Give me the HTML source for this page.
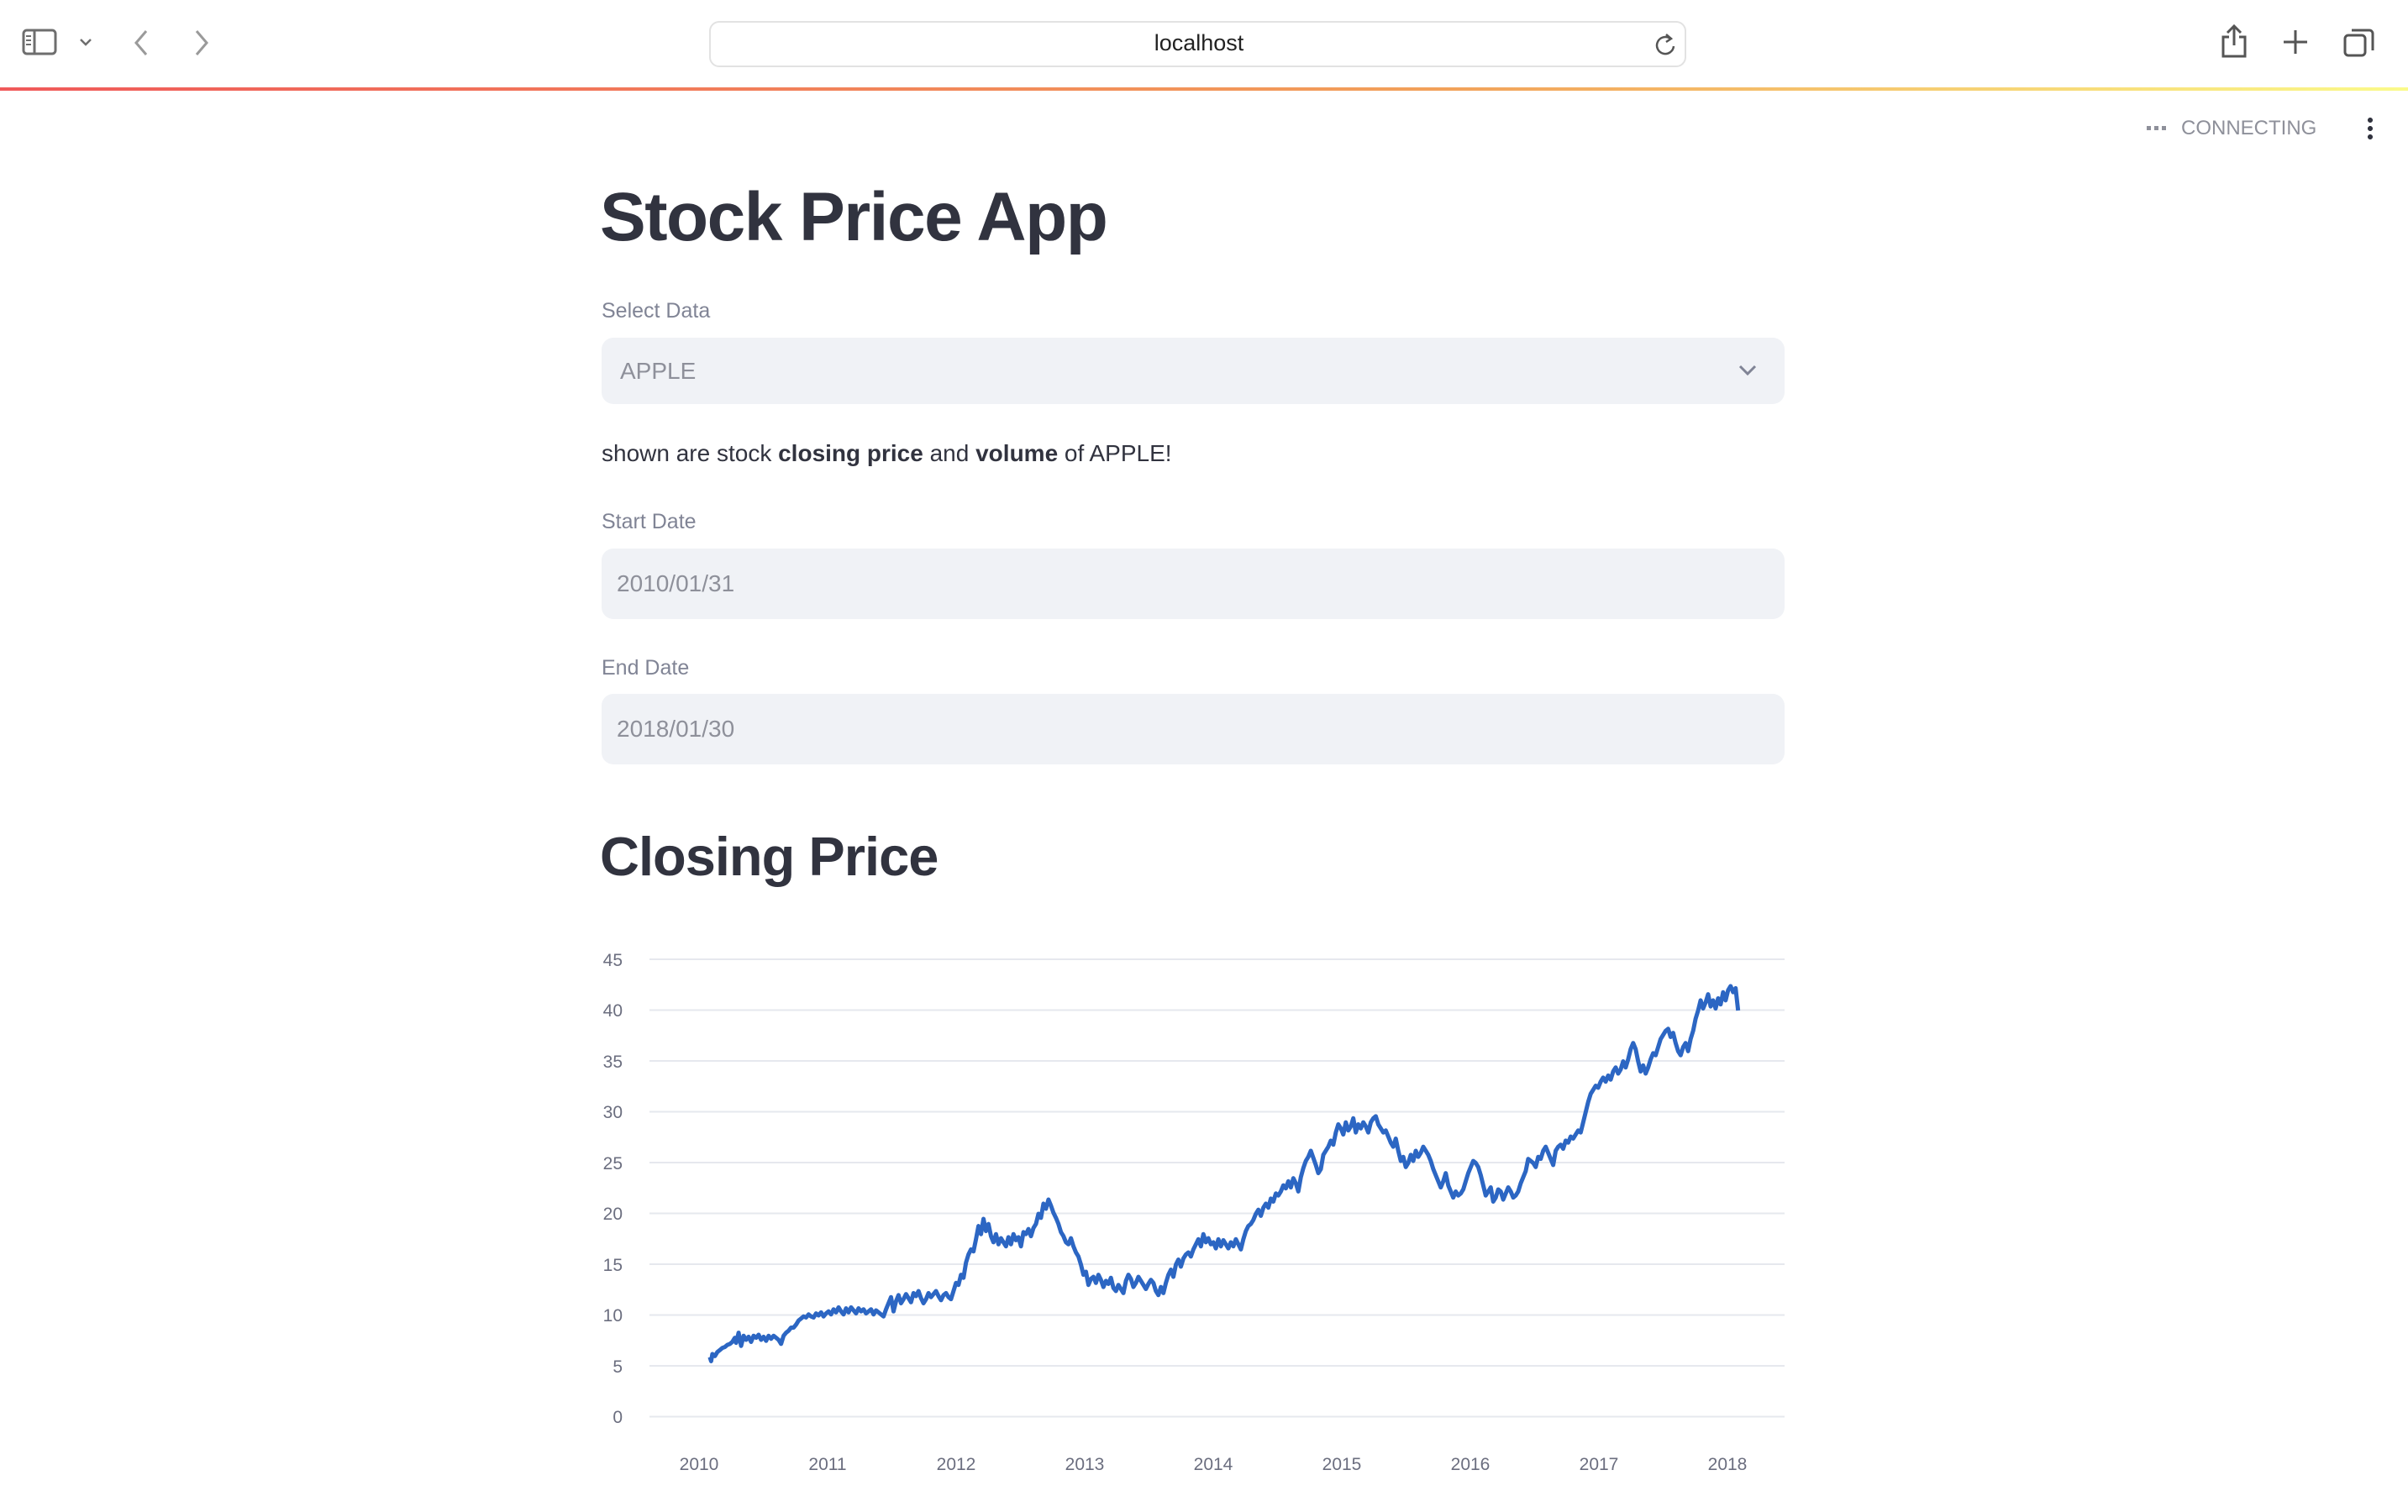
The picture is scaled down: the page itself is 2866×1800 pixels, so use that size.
<!DOCTYPE html>
<html><head><meta charset="utf-8"><style>
*{margin:0;padding:0;box-sizing:border-box}
body{width:2866px;height:1800px;background:#fff;font-family:"Liberation Sans",sans-serif;position:relative;overflow:hidden;color:#31333f}
.abs{position:absolute}
.url{left:844px;top:25px;width:1163px;height:55px;border:2px solid #e2e2e2;border-radius:12px;background:#fff}
.grad{left:0;top:104px;width:2866px;height:4px;background:linear-gradient(90deg,#f0595a,#f2a15a 60%,#fafa8a)}
.label{font-size:25px;color:#808495;left:716px}
.box{left:716px;width:1408px;background:#f0f2f6;border-radius:14px}
.ph{font-size:28px;color:#8e909a;position:absolute}
</style></head><body>
<svg class="abs" style="left:26px;top:34px" width="44" height="34" viewBox="0 0 44 34"><rect x="2" y="2" width="38" height="28" rx="4" fill="none" stroke="#6e6e6e" stroke-width="3"/><line x1="15" y1="2" x2="15" y2="30" stroke="#6e6e6e" stroke-width="3"/><rect x="5" y="8" width="6" height="2" fill="#6e6e6e"/><rect x="5" y="13" width="6" height="2" fill="#6e6e6e"/><rect x="5" y="18" width="6" height="2" fill="#6e6e6e"/></svg>
<svg class="abs" style="left:94px;top:44px" width="16" height="12"><path d="M2 3 L8 9 L14 3" fill="none" stroke="#6e6e6e" stroke-width="2.5"/></svg>
<svg class="abs" style="left:158px;top:34px" width="20" height="34"><path d="M16 3 L4 17 L16 31" fill="none" stroke="#9a9a9a" stroke-width="3"/></svg>
<svg class="abs" style="left:230px;top:34px" width="20" height="34"><path d="M4 3 L16 17 L4 31" fill="none" stroke="#9a9a9a" stroke-width="3"/></svg>
<div class="abs url"></div>
<div class="abs" style="left:1327px;top:36px;width:200px;text-align:center;font-size:27px;color:#222">localhost</div>
<svg class="abs" style="left:1968px;top:38px" width="28" height="30"><path d="M20 8 A10 10 0 1 0 24 17" fill="none" stroke="#555" stroke-width="2.5"/><path d="M15 3 L21 8 L15 12" fill="none" stroke="#555" stroke-width="2.5"/></svg>
<svg class="abs" style="left:2642px;top:28px" width="34" height="42"><path d="M17 26 V4 M9 11 L17 3 L25 11" fill="none" stroke="#555" stroke-width="3"/><path d="M11 16 H4 V39 H30 V16 H23" fill="none" stroke="#555" stroke-width="3"/></svg>
<svg class="abs" style="left:2716px;top:34px" width="32" height="32"><path d="M16 2 V30 M2 16 H30" stroke="#555" stroke-width="3"/></svg>
<svg class="abs" style="left:2788px;top:32px" width="40" height="38"><rect x="3" y="10" width="24" height="24" rx="4" fill="none" stroke="#555" stroke-width="3"/><path d="M11 4 H32 A4 4 0 0 1 36 8 V28" fill="none" stroke="#555" stroke-width="3"/></svg>
<div class="abs grad"></div>
<div class="abs" style="left:2555px;top:150px;width:24px;height:5px;background:repeating-linear-gradient(90deg,#8e909a 0 5px,transparent 5px 9px)"></div>
<div class="abs" style="left:2596px;top:139px;font-size:24px;color:#8e909a">CONNECTING</div>
<div class="abs" style="left:2818px;top:138px;width:6px;height:28px;background:radial-gradient(circle,#31333f 2.8px,transparent 3.2px) 0 0/6px 10px repeat-y"></div>
<div class="abs" style="left:714px;top:212px;font-size:82px;font-weight:bold;letter-spacing:-1.5px;color:#31333f">Stock Price App</div>
<div class="abs label" style="top:356px">Select Data</div>
<div class="abs box" style="top:402px;height:79px"><span class="ph" style="left:22px;top:24px">APPLE</span>
<svg class="abs" style="left:1352px;top:31px" width="24" height="16"><path d="M3 3 L12 12 L21 3" fill="none" stroke="#808495" stroke-width="3"/></svg></div>
<div class="abs" style="left:716px;top:524px;font-size:28px;color:#31333f">shown are stock <b>closing price</b> and <b>volume</b> of APPLE!</div>
<div class="abs label" style="top:607px">Start Date</div>
<div class="abs box" style="top:653px;height:84px"><span class="ph" style="left:18px;top:26px">2010/01/31</span></div>
<div class="abs label" style="top:781px">End Date</div>
<div class="abs box" style="top:826px;height:84px"><span class="ph" style="left:18px;top:26px">2018/01/30</span></div>
<div class="abs" style="left:714px;top:982px;font-size:65px;font-weight:bold;letter-spacing:-1px;color:#31333f">Closing Price</div>
<svg class="abs" style="left:0;top:0" width="2866" height="1800">
<g stroke="#e6e8ee" stroke-width="2">
<line x1="773" x2="2124" y1="1142" y2="1142"/><line x1="773" x2="2124" y1="1202.5" y2="1202.5"/><line x1="773" x2="2124" y1="1263" y2="1263"/><line x1="773" x2="2124" y1="1323.5" y2="1323.5"/><line x1="773" x2="2124" y1="1384" y2="1384"/><line x1="773" x2="2124" y1="1444.5" y2="1444.5"/><line x1="773" x2="2124" y1="1505" y2="1505"/><line x1="773" x2="2124" y1="1565.5" y2="1565.5"/><line x1="773" x2="2124" y1="1626" y2="1626"/><line x1="773" x2="2124" y1="1686.5" y2="1686.5"/>
</g>
<g font-size="21" fill="#6b6e7f" text-anchor="end" font-family="Liberation Sans,sans-serif">
<text x="741" y="1150">45</text><text x="741" y="1210">40</text><text x="741" y="1271">35</text><text x="741" y="1331">30</text><text x="741" y="1392">25</text><text x="741" y="1452">20</text><text x="741" y="1513">15</text><text x="741" y="1573">10</text><text x="741" y="1634">5</text><text x="741" y="1694">0</text>
</g>
<g font-size="21" fill="#6b6e7f" text-anchor="middle" font-family="Liberation Sans,sans-serif">
<text x="832" y="1750">2010</text><text x="985" y="1750">2011</text><text x="1138" y="1750">2012</text><text x="1291" y="1750">2013</text><text x="1444" y="1750">2014</text><text x="1597" y="1750">2015</text><text x="1750" y="1750">2016</text><text x="1903" y="1750">2017</text><text x="2056" y="1750">2018</text>
</g>
<g transform="translate(833,1687) scale(1.487,-1.21)">
<polyline fill="none" stroke="#2c66c3" stroke-width="5" vector-effect="non-scaling-stroke" stroke-linejoin="round" points="
8,59 9,55 10,62 12,60 14,64 16,66 18,68 20,69 22,71 24,72 26,74 28,78 29,73 31,83 32,76 33,70 35,80 37,76 39,79 41,74 43,80 45,78 47,81 49,76 51,79 53,75 55,80 57,77 59,80 61,78 63,76 65,72 67,80 69,83 71,85 73,88 75,88 77,91 79,95 81,97 83,99 85,98 87,101 89,99 91,98 93,102 95,100 97,103 99,99 101,102 103,104 105,101 107,106 109,103 111,108 113,104 115,101 117,107 119,103 121,108 123,105 125,102 127,107 129,104 131,106 133,102 135,104 137,106 139,101 141,105 143,103 145,101 147,99 149,106 151,112 153,118 155,104 157,114 159,120 161,112 163,116 165,121 167,117 169,113 171,122 173,119 175,124 177,117 179,112 181,116 183,122 185,118 187,121 189,124 191,119 193,115 195,120 197,122 199,118 201,116 203,124 205,132 207,130 209,140 211,137 213,152 215,160 217,165 219,163 221,175 223,188 225,180 227,195 229,183 231,190 233,178 235,172 237,180 239,170 241,176 243,172 245,168 247,177 249,170 251,180 253,174 255,177 257,168 259,182 261,180 263,185 265,178 267,186 269,190 271,200 273,196 275,210 277,205 279,214 281,208 283,201 285,196 287,190 289,182 291,178 293,172 295,170 297,176 299,168 301,162 303,158 305,150 307,140 309,143 311,130 313,136 315,138 317,132 319,140 321,135 323,128 325,134 327,131 329,137 331,127 333,124 335,130 337,126 339,122 341,134 343,140 345,136 347,128 349,132 351,138 353,134 355,130 357,126 359,131 361,135 363,132 365,124 367,120 369,128 371,122 373,132 375,140 377,145 379,138 381,150 383,155 385,148 387,156 389,160 391,162 393,158 395,165 397,170 399,175 401,168 403,180 405,172 407,176 409,170 411,172 413,166 415,175 417,168 419,174 421,170 423,166 425,172 427,168 429,175 431,170 433,165 435,175 437,183 439,188 441,190 443,194 445,200 447,204 449,198 451,206 453,210 455,206 457,215 459,212 461,220 463,218 465,222 467,228 469,225 471,232 473,226 475,235 477,230 479,222 481,236 483,245 485,252 487,256 489,262 491,255 493,248 495,240 497,244 499,258 501,262 503,266 505,272 507,268 509,280 511,288 513,284 515,278 517,290 519,282 521,286 523,294 525,280 527,288 529,284 531,290 533,286 535,280 537,290 539,294 541,296 543,288 545,284 547,280 549,282 551,276 553,270 555,266 557,274 559,262 561,252 563,256 565,246 567,250 569,258 571,252 573,262 575,256 577,260 579,266 581,262 583,258 585,252 587,244 589,238 591,232 593,226 595,232 597,240 599,228 601,222 603,216 605,222 607,218 609,220 611,224 613,232 615,240 617,246 619,252 621,250 623,246 625,238 627,228 629,218 631,222 633,226 635,212 637,216 639,224 641,222 643,214 645,220 647,226 649,222 651,216 653,218 655,222 657,230 659,236 661,242 663,254 665,252 667,250 669,246 671,256 673,254 675,262 677,266 679,260 681,254 683,248 685,262 687,266 689,268 691,264 693,272 695,270 697,276 699,274 701,278 703,282 705,280 707,290 709,300 711,310 713,318 715,322 717,326 719,324 721,330 723,334 725,330 727,336 729,332 731,340 733,344 735,338 737,342 739,350 741,344 743,352 745,362 747,368 749,362 751,350 753,340 755,346 757,338 759,344 761,352 763,358 765,356 767,364 769,372 771,376 773,380 775,382 777,374 779,378 781,368 783,360 785,356 787,364 789,368 791,360 793,372 795,380 797,392 799,400 801,410 803,402 805,408 807,416 809,404 811,410 813,402 815,412 817,406 819,418 821,410 823,420 825,424 827,418 829,422 831,400"/>
</g>
</svg>
</body></html>
